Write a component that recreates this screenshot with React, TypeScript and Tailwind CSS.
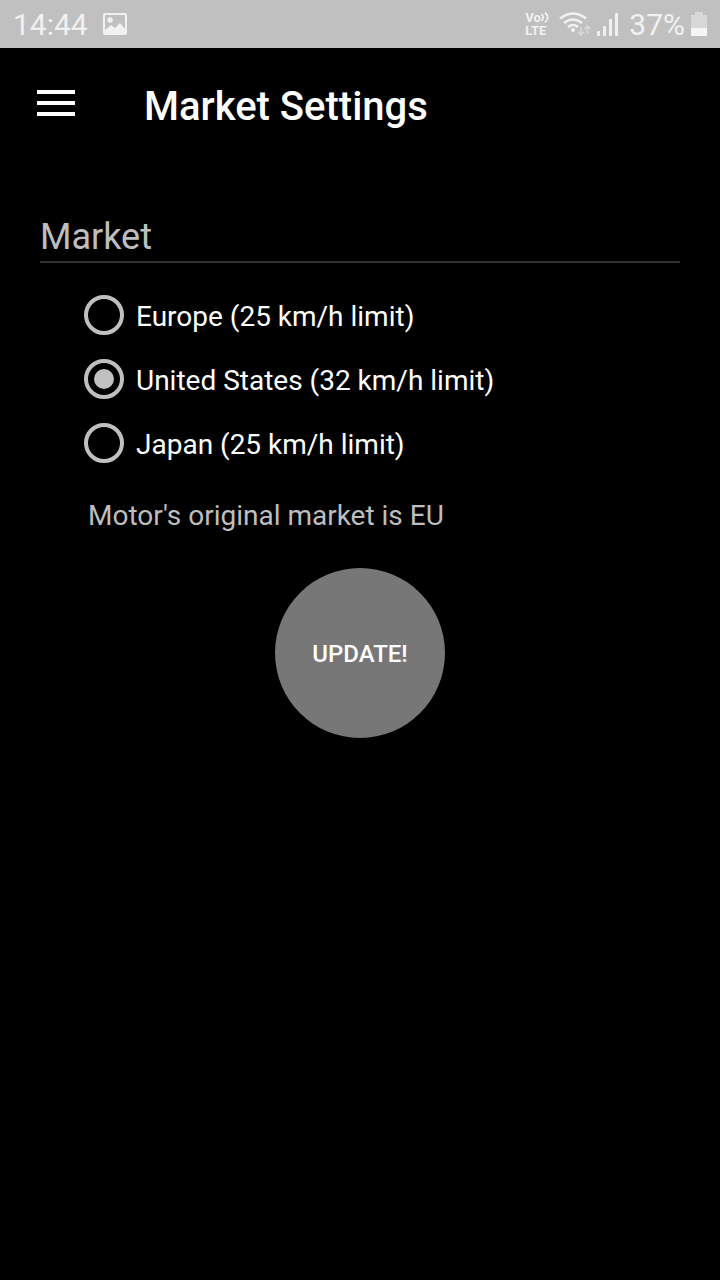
import { useState } from "react";

const MARKETS = [
  { id: "eu", label: "Europe (25 km/h limit)" },
  { id: "us", label: "United States (32 km/h limit)" },
  { id: "jp", label: "Japan (25 km/h limit)" },
];

function PictureIcon() {
  return (
    <svg width="24" height="22" viewBox="0 0 24 22" aria-hidden="true">
      <path
        fill="#f1f1f1"
        fillRule="evenodd"
        d="M2 0h20a2 2 0 0 1 2 2v18a2 2 0 0 1-2 2H2a2 2 0 0 1-2-2V2a2 2 0 0 1 2-2Zm0 2v15l6-5 4 3 5-5 5 6V2Z"
      />
      <circle cx="7" cy="7" r="2.7" fill="#f1f1f1" />
    </svg>
  );
}

function VolteIcon() {
  return (
    <span className="flex w-6 flex-col text-[13px] leading-[13px] font-bold">
      <span className="flex items-center">
        Vo
        <svg width="8" height="13" viewBox="0 0 8 13" fill="none" stroke="currentColor" strokeWidth="1.7" className="shrink-0" aria-hidden="true">
          <path d="M0.5 3q3.5 3.5 0 7M4 1.5q5.5 5 0 10" />
        </svg>
      </span>
      <span>LTE</span>
    </span>
  );
}

function WifiIcon() {
  return (
    <svg width="32" height="24" viewBox="0 0 32 24" fill="none" aria-hidden="true">
      <g stroke="#f1f1f1" strokeWidth="2.4">
        <path d="M1 6.5Q14 -3.5 27 6.5" />
        <path d="M5 11Q14 4 23 11" />
        <path d="M9 15Q14 11 19 15" />
      </g>
      <circle cx="14" cy="18" r="2" fill="#f1f1f1" />
      <g stroke="#d6d6d6" strokeWidth="1.8">
        <path d="M22 15v8M19 20l3 3 3-3" />
        <path d="M28.5 22v-8M25.5 17l3-3 3 3" />
      </g>
    </svg>
  );
}

function SignalIcon() {
  return (
    <svg width="22" height="23" viewBox="0 0 22 23" fill="#f1f1f1" aria-hidden="true">
      <rect x="0" y="18" width="3" height="5" rx="1" />
      <rect x="6" y="13" width="3" height="10" rx="1" />
      <rect x="12" y="6" width="3" height="17" rx="1" />
      <rect x="18" y="0" width="3" height="23" rx="1" />
    </svg>
  );
}

function BatteryIcon() {
  return (
    <svg width="16" height="24" viewBox="0 0 16 24" aria-hidden="true">
      <path fill="#d8d8d8" d="M4 0h8v3h4v13H0V3h4Z" />
      <path fill="#f5f5f5" d="M0 16h16v7a1 1 0 0 1-1 1H1a1 1 0 0 1-1-1Z" />
    </svg>
  );
}

function StatusBar() {
  return (
    <div className="flex h-12 items-center justify-between bg-[#c0c0c0] px-[13px] text-[30px] leading-12 text-[#f1f1f1]">
      <div className="flex items-center gap-[15px]">
        <span className="pt-px">14:44</span>
        <PictureIcon />
      </div>
      <div className="flex items-center gap-2.5">
        <VolteIcon />
        <div className="flex items-center gap-1.5">
          <WifiIcon />
          <SignalIcon />
        </div>
        <div className="flex items-center gap-1.5">
          <span className="pt-px">37%</span>
          <BatteryIcon />
        </div>
      </div>
    </div>
  );
}

export default function App() {
  const [market, setMarket] = useState("us");

  return (
    <div className="min-h-screen bg-black font-[Roboto,sans-serif] text-white">
      <StatusBar />

      <header className="flex h-[110px] items-center gap-17 px-9">
        <button type="button" aria-label="Open menu" className="flex w-10 justify-center">
          <svg width="38" height="26" viewBox="0 0 38 26" fill="#fff" aria-hidden="true">
            <path d="M0 0h38v4H0zM0 11h38v4H0zM0 22h38v4H0z" />
          </svg>
        </button>
        <h1 className="pt-2 text-[40px] leading-12 font-medium">Market Settings</h1>
      </header>

      <main className="px-10 pt-14">
        <form onSubmit={(e) => e.preventDefault()}>
          <fieldset>
            <legend className="w-full border-b-2 border-[#333] text-4xl leading-[47px] text-[#bebebe]">
              Market
            </legend>
            <div className="pt-5 pl-11">
              {MARKETS.map((m) => (
                <label key={m.id} className="flex h-16 items-center gap-3 text-[28px]">
                  <input
                    type="radio"
                    name="market"
                    value={m.id}
                    checked={market === m.id}
                    onChange={() => setMarket(m.id)}
                    className="grid size-10 shrink-0 appearance-none place-items-center rounded-full border-4 border-[#c0c0c0] before:size-5 before:rounded-full checked:before:bg-[#c0c0c0]"
                  />
                  <span className="pt-1">{m.label}</span>
                </label>
              ))}
            </div>
          </fieldset>

          <p className="mt-[21px] pl-12 text-[28px] leading-10 text-[#bebebe]">
            Motor's original market is EU
          </p>

          <button
            type="submit"
            className="mx-auto mt-8 block size-[170px] rounded-full bg-[#777] pt-0.5 text-2xl font-medium uppercase"
          >
            Update!
          </button>
        </form>
      </main>
    </div>
  );
}
